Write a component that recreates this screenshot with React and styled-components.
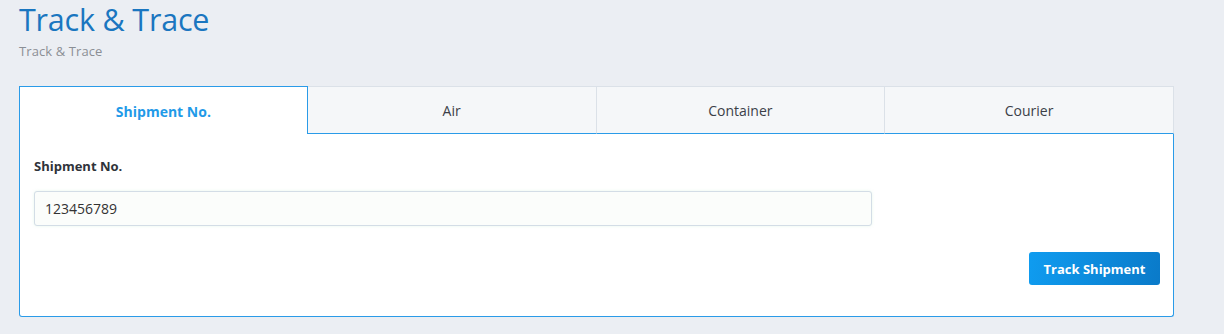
import React, { useState } from "react";
import styled, { createGlobalStyle } from "styled-components";

const Global = createGlobalStyle`
  html, body { margin: 0; padding: 0; background: #ebeef3; }
  body { font-family: "Open Sans", "Lato", sans-serif; color: #333; }
  * { box-sizing: border-box; }
`;

const Page = styled.div`
  padding: 0 50px 0 19px;
  height: 334px;
`;

const Title = styled.h1`
  margin: 0;
  padding-top: 1px;
  font-size: 30.5px;
  font-weight: 400;
  line-height: 37px;
  letter-spacing: -0.2px;
  color: #1a76c0;
`;

const Subtitle = styled.div`
  margin-top: 5px;
  font-size: 13px;
  line-height: 16px;
  letter-spacing: 0.1px;
  color: #8b8f95;
`;

const Card = styled.div`
  margin-top: 27px;
  width: 1155px;
`;

const Tabs = styled.div`
  display: grid;
  grid-template-columns: repeat(4, 1fr);
  height: 48px;
`;

const Tab = styled.button`
  font-family: inherit;
  font-size: 14px;
  border: 1px solid ${(p) => (p.$active ? "#2a9be8" : "#dbe1e8")};
  border-bottom: ${(p) => (p.$active ? "none" : "1px solid #2a9be8")};
  border-left-width: ${(p) => (p.$first || p.$active ? "1px" : "0")};
  background: ${(p) => (p.$active ? "#fff" : "#f5f7f9")};
  color: ${(p) => (p.$active ? "#1f9ae8" : "#3b3f48")};
  font-weight: ${(p) => (p.$active ? 700 : 400)};
  cursor: pointer;
  padding: 0;
  padding-top: 1px;
`;

const Body = styled.div`
  background: #fff;
  border: 1px solid #2a9be8;
  border-top: none;
  border-radius: 0 0 3px 3px;
  padding: 24px 13px 31px 14px;
`;

const Label = styled.label`
  display: block;
  font-size: 13px;
  font-weight: 700;
  color: #2f333a;
  line-height: 16px;
`;

const Input = styled.input`
  display: block;
  margin-top: 17px;
  width: 838px;
  height: 35px;
  border: 1px solid #d3dde6;
  border-radius: 3px;
  background: #fbfdfb;
  padding: 0 10px;
  font-family: inherit;
  font-size: 14px;
  color: #333;
  outline: none;
  box-shadow: 0 0 3px rgba(180, 230, 200, 0.35);
`;

const Actions = styled.div`
  display: flex;
  justify-content: flex-end;
  margin-top: 26px;
`;

const Button = styled.button`
  width: 131px;
  height: 33px;
  border: none;
  border-radius: 3px;
  background: linear-gradient(100deg, #0f9cf0 0%, #0a7ac9 100%);
  color: #fff;
  font-family: inherit;
  font-size: 13px;
  font-weight: 700;
  cursor: pointer;
`;

const tabs = ["Shipment No.", "Air", "Container", "Courier"];

export default function App() {
  const [active, setActive] = useState(0);
  const [value, setValue] = useState("123456789");
  return (
    <>
      <Global />
      <Page>
        <Title>Track &amp; Trace</Title>
        <Subtitle>Track &amp; Trace</Subtitle>
        <Card>
          <Tabs>
            {tabs.map((t, i) => (
              <Tab
                key={t}
                $active={i === active}
                $first={i === 0}
                onClick={() => setActive(i)}
              >
                {t}
              </Tab>
            ))}
          </Tabs>
          <Body>
            <Label htmlFor="ship">Shipment No.</Label>
            <Input
              id="ship"
              autoFocus
              value={value}
              onChange={(e) => setValue(e.target.value)}
            />
            <Actions>
              <Button>Track Shipment</Button>
            </Actions>
          </Body>
        </Card>
      </Page>
    </>
  );
}
